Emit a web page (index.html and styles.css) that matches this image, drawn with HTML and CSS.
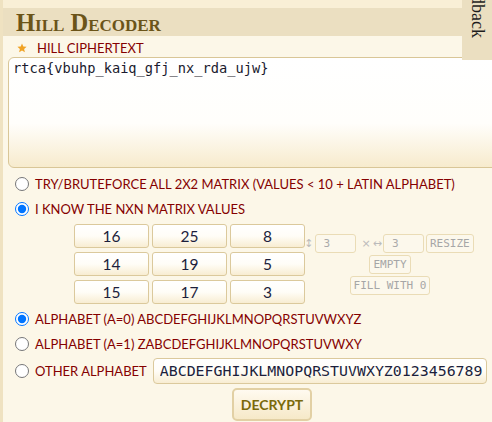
FILE: index.html
```html
<!DOCTYPE html>
<html>
<head>
<meta charset="utf-8">
<link rel="stylesheet" href="styles.css">
</head>
<body>
<div class="page">
  <div class="panel">
    <div class="header"><h1 class="title">Hill Decoder</h1></div>
    <div class="body">
      <div class="label-row">
        <svg class="star" width="10" height="10" viewBox="0 0 10 10"><path d="M5 0.5 L6.3 3.6 L9.6 3.8 L7.1 6 L7.9 9.3 L5 7.5 L2.1 9.3 L2.9 6 L0.4 3.8 L3.7 3.6 Z" fill="#f0a224"/></svg>
        <span class="label">HILL CIPHERTEXT</span>
      </div>
      <textarea class="cipher" spellcheck="false">rtca{vbuhp_kaiq_gfj_nx_rda_ujw}</textarea>
      <div class="options">
        <label class="opt"><input type="radio" name="mode"><span>TRY/BRUTEFORCE ALL 2X2 MATRIX (VALUES &lt; 10 + LATIN ALPHABET)</span></label>
        <label class="opt"><input type="radio" name="mode" checked><span>I KNOW THE NXN MATRIX VALUES</span></label>
      </div>
      <div class="matrix-row">
        <div class="matrix">
          <input class="cell" value="16"><input class="cell" value="25"><input class="cell" value="8">
          <input class="cell" value="14"><input class="cell" value="19"><input class="cell" value="5">
          <input class="cell" value="15"><input class="cell" value="17"><input class="cell" value="3">
        </div>
        <div class="controls">
          <div class="ctl-line">
            <span class="sym">↕</span><input class="dim" value="3" disabled><span class="sym x">×</span><span class="sym">↔</span><input class="dim" value="3" disabled><button class="small" disabled>RESIZE</button>
          </div>
          <button class="small" disabled>EMPTY</button>
          <button class="small" disabled>FILL WITH 0</button>
        </div>
      </div>
      <div class="alpha">
        <label class="opt"><input type="radio" name="alpha" checked><span>ALPHABET (A=0) ABCDEFGHIJKLMNOPQRSTUVWXYZ</span></label>
        <label class="opt"><input type="radio" name="alpha"><span>ALPHABET (A=1) ZABCDEFGHIJKLMNOPQRSTUVWXY</span></label>
        <label class="opt other"><input type="radio" name="alpha"><span class="nowrap">OTHER ALPHABET</span><input class="alpha-input" value="ABCDEFGHIJKLMNOPQRSTUVWXYZ0123456789"></label>
      </div>
      <div class="actions"><button class="decrypt">DECRYPT</button></div>
    </div>
  </div>
  <div class="tab">Feedback</div>
</div>
</body>
</html>
```

FILE: styles.css
```css
html, body {
  margin: 0;
  padding: 0;
  overflow: hidden;
}
body {
  background: #f9efd6;
  width: 492px;
  height: 422px;
  font-family: "Lato", "DejaVu Sans", sans-serif;
}
.page {
  position: relative;
  height: 422px;
  padding-top: 8px;
  box-sizing: border-box;
  border-left: 3px solid #efe2c1;
}
.panel {
  background: #fcf7e8;
  height: 100%;
}
.header {
  background: #ebdfc1;
  height: 28px;
  padding-left: 13px;
  display: flex;
  align-items: center;
}
.title {
  margin: 2px 0 0 0;
  font-family: "Liberation Serif", serif;
  font-variant: small-caps;
  font-weight: bold;
  font-size: 24.5px;
  color: #6b5419;
  line-height: 1;
}
.body {
  padding: 5px 0 0 5px;
}
.label-row {
  display: flex;
  align-items: center;
  height: 14px;
  padding-left: 9px;
  gap: 10px;
}
.star { display: block; }
.label {
  font-size: 13px;
  color: #850000;
}
.cipher {
  display: block;
  margin-top: 2px;
  width: 500px;
  height: 111px;
  box-sizing: border-box;
  border: 1px solid #d9c697;
  border-radius: 6px;
  background: linear-gradient(to bottom, #ffffff 0%, #fffefb 60%, #f7ebcd 100%);
  font-family: "DejaVu Sans Mono", monospace;
  font-size: 13.7px;
  color: #1a1a2e;
  padding: 2px 4px;
  resize: none;
  outline: none;
}
.options {
  display: flex;
  flex-direction: column;
  gap: 11px;
  margin-top: 9px;
}
.opt {
  display: flex;
  align-items: center;
  height: 14px;
  font-size: 13px;
  color: #850000;
  white-space: nowrap;
}
.opt input[type=radio] {
  margin: 0 6px 0 7px;
  width: 14px;
  height: 14px;
  flex-shrink: 0;
}
.nowrap { flex-shrink: 0; }
.matrix-row {
  display: flex;
  align-items: center;
  margin-top: 8px;
  padding-left: 66px;
}
.matrix {
  display: grid;
  grid-template-columns: repeat(3, 75px);
  grid-auto-rows: 24px;
  column-gap: 3px;
  row-gap: 4px;
}
.cell {
  box-sizing: border-box;
  width: 100%;
  height: 100%;
  border: 1px solid #dbc99c;
  border-radius: 3px;
  background: linear-gradient(to bottom, #ffffff 0%, #fffdf7 50%, #f8edd2 100%);
  text-align: center;
  font-family: "Lato", "DejaVu Sans", sans-serif;
  font-size: 15.5px;
  color: #1c1f3c;
  padding: 0;
  outline: none;
}
.controls {
  width: 166px;
  margin-left: 1px;
  display: flex;
  flex-direction: column;
  align-items: center;
  gap: 2px;
}
.ctl-line {
  display: flex;
  align-items: center;
}
.sym {
  color: #bbb;
  font-size: 11px;
  font-family: "DejaVu Sans", sans-serif;
}
.sym.x { margin: 0 2px 0 6px; }
.dim {
  box-sizing: border-box;
  width: 41px;
  height: 19px;
  border: 1px solid #eadcb6;
  border-radius: 3px;
  background: #fcf8ec;
  font-family: "DejaVu Sans Mono", monospace;
  font-size: 11px;
  color: #aaa;
  padding: 0 8px;
  margin-left: 1px;
}
.small {
  box-sizing: border-box;
  height: 19px;
  border: 1px solid #eadcb6;
  border-radius: 3px;
  background: #fcf8ec;
  font-family: "DejaVu Sans Mono", monospace;
  font-size: 11px;
  color: #a6a6a6;
  padding: 0 3px;
  margin-left: 2px;
}
.alpha {
  display: flex;
  flex-direction: column;
  margin-top: 8px;
  gap: 11px;
}
.opt.other {
  height: 25px;
  margin-top: -4px;
}
.alpha-input {
  box-sizing: border-box;
  margin-left: 6px;
  width: 334px;
  height: 26px;
  flex-shrink: 0;
  border: 1px solid #dbc99c;
  border-radius: 4px;
  background: linear-gradient(to bottom, #ffffff 0%, #fffdf7 50%, #f8edd2 100%);
  font-family: "DejaVu Sans Mono", monospace;
  font-size: 14.9px;
  color: #1c1f3c;
  padding: 0 0 0 6px;
  outline: none;
}
.actions {
  display: flex;
  margin-top: 5px;
}
.decrypt {
  width: 80px;
  height: 33px;
  border: 2px solid #e2d0a4;
  border-radius: 5px;
  background: linear-gradient(to bottom, #fffaf0 0%, #f6e9c8 100%);
  font-family: "Lato", "DejaVu Sans", sans-serif;
  font-weight: bold;
  font-size: 14px;
  color: #7a6a0a;
  margin-left: 224px;
}
.tab {
  position: absolute;
  top: 0;
  right: 0;
  width: 30px;
  height: 60px;
  background: #ebdfc1;
  writing-mode: vertical-rl;
  font-family: "Liberation Serif", serif;
  font-size: 18px;
  color: #1d1d1d;
  display: flex;
  align-items: center;
  justify-content: flex-end;
  padding-bottom: 22px;
  box-sizing: border-box;
  overflow: hidden;
}
```
